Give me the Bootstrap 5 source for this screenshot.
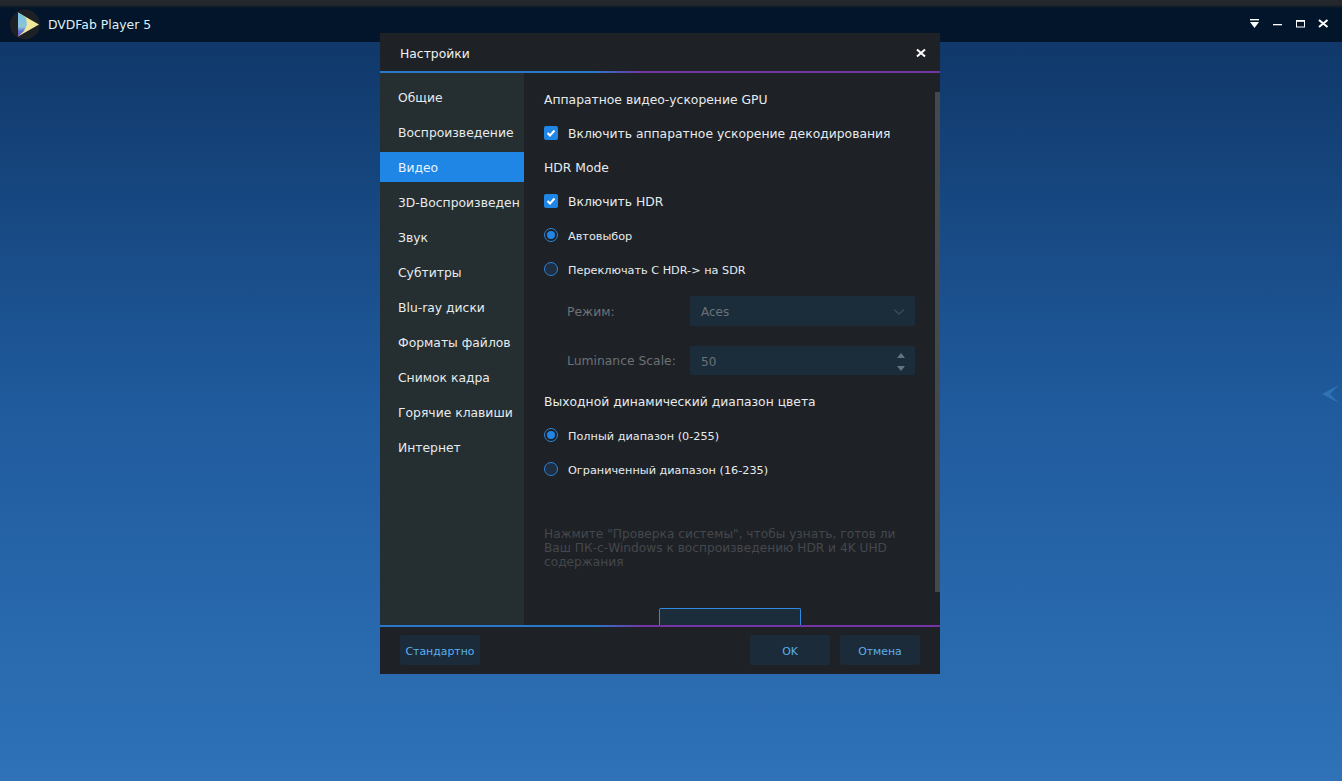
<!DOCTYPE html>
<html lang="ru">
<head>
<meta charset="utf-8">
<title>DVDFab Player 5</title>
<link href="https://cdn.jsdelivr.net/npm/bootstrap@5.3.0/dist/css/bootstrap.min.css" rel="stylesheet">
<style>
html,body{height:100%;}
body{font-family:"DejaVu Sans",sans-serif;font-size:12.35px;color:#e6ebee;background:linear-gradient(180deg,#10386a 42px,#1f5a9c 400px,#2f72b8 781px);overflow:hidden;height:781px;position:relative;}
.topstrip{height:42px;background-color:#03152b;background-image:linear-gradient(180deg,#23262a 0,#23262a 5px,#03152b 8px);padding:8px 0 0 10px;}
.appname{color:#dff0f5;font-size:12.4px;margin-left:6px;}
.winbtns{gap:11px;padding-right:12px;margin-bottom:2px;}
.dlg{position:absolute;left:380px;top:33px;width:560px;height:641px;background:#1e2126;}
.dlghead{height:38px;padding:2px 13px 0 20px;flex:none;}
.dlgtitle{font-size:12.35px;color:#eef1f3;padding-top:2px;}
.dlgclose{margin-bottom:1px;}
.gline{height:2px;margin-bottom:-1px;background:linear-gradient(90deg,#2a78c8 0,#2a78c8 38%,#7434a4 47%,#7434a4 100%);flex:none;position:relative;z-index:2;}
.dlgbody{height:553px;overflow:hidden;position:relative;}
.sidebar{width:144px;flex:none;background:#252e31;padding-top:10px;}
.sideitem{height:30px;margin-bottom:5px;line-height:32px;padding-left:18px;white-space:nowrap;color:#e6ebee;}
.sideitem.active-item{background:#1f86e6;color:#e9f3fb;}
.mainpane{padding:11px 0 0 20px;position:relative;flex:1;}
.rowline{height:34px;line-height:34px;display:flex;align-items:center;white-space:nowrap;}
.minor{font-size:11.25px;padding-top:2px;}
.chk{width:14px;height:14px;border-radius:2px;background:#1f86e6;margin:0 10px 2px 0;flex:none;display:flex;align-items:center;justify-content:center;}
.rad{width:14px;height:14px;border-radius:50%;border:1.5px solid #2c84d8;margin:0 10px 4px 0;flex:none;display:flex;align-items:center;justify-content:center;background:#1e2f42;}
.rad.on{background:transparent;}
.rad.on::after{content:"";width:8px;height:8px;border-radius:50%;background:#1f86e6;}
.fieldrow{display:flex;align-items:center;height:30px;margin-left:23px;color:#6b7278;margin-top:9px;}
.fieldspin{margin-top:20px;height:29px;}
.outhead{margin-top:10px;}
.fieldlabel{width:123px;flex:none;padding-top:2px;}
.fieldbox{width:225px;height:100%;background-color:#1b2c3a;background-image:radial-gradient(#31485a 0.6px,transparent 0.7px);background-size:4px 4px;border-radius:2px;display:flex;align-items:center;justify-content:space-between;padding:2px 10px 0 11px;color:#6b7278;font-size:12px;}
.hinttext{color:#44484c;font-size:12.2px;line-height:14px;width:370px;margin-top:40px;}
.sysbtn{position:absolute;left:135px;bottom:0;width:142px;height:17px;border:1px solid #2f8ae0;border-bottom:0;border-radius:2px 2px 0 0;background:#1b2c3a;}
.scrollthumb{position:absolute;right:0;top:20px;width:5px;height:500px;background:#45494c;}
.dlgfoot{padding:9px 20px 0 20px;height:48px;}
.footright{gap:10px;}
.footbtn{width:80px;height:30px;padding:2px 0 0;background-color:#1b2b39;background-image:radial-gradient(#27394a 0.6px,transparent 0.7px);background-size:4px 4px;color:#5bb0ee;font-size:10.9px;border:0;border-radius:2px;line-height:30px;text-align:center;}
.sidearrow{position:absolute;right:3px;top:384px;}
</style>
</head>
<body>
<div class="topstrip d-flex align-items-center justify-content-between">
  <div class="d-flex align-items-center">
    <svg width="32" height="32" viewBox="0 0 32 32" aria-label="DVDFab logo">
      <defs><linearGradient id="lg" x1="0" y1="0" x2="0" y2="1"><stop offset="0" stop-color="#6ec4ea"/><stop offset=".6" stop-color="#8fc3d6"/><stop offset=".78" stop-color="#5d6fd0"/><stop offset="1" stop-color="#7a4fb8"/></linearGradient></defs>
      <circle cx="15" cy="15.5" r="15" fill="#1d2024"/>
      <path d="M8 3.5 L29 15.5 L8 27.5 Z" fill="#efe79a"/>
      <path d="M8 3.5 L11 5.3 L16 9 L17 16 L14 22 L8 27.5 Z" fill="url(#lg)"/>
    </svg>
    <span class="appname">DVDFab Player 5</span>
  </div>
  <div class="d-flex align-items-center winbtns">
    <svg width="12" height="12" viewBox="0 0 12 12"><rect x="1" y="1" width="9" height="1.4" fill="#fff"/><path d="M1 4H10L5.5 10Z" fill="#fff"/></svg>
    <svg width="12" height="12" viewBox="0 0 12 12"><rect x="1" y="6" width="9" height="1.3" fill="#fff"/></svg>
    <svg width="12" height="12" viewBox="0 0 12 12"><rect x="1.5" y="2.5" width="8" height="6.5" fill="none" stroke="#fff" stroke-width="1"/><rect x="1" y="2" width="9" height="1.8" fill="#fff"/></svg>
    <svg width="12" height="12" viewBox="0 0 12 12"><path d="M1 2 L9.5 9 M9.5 2 L1 9" stroke="#fff" stroke-width="2"/></svg>
  </div>
</div>

<div class="sidearrow">
  <svg width="17" height="18" viewBox="0 0 17 18"><path d="M0 9 L17 0 L8 9 L17 18 Z" fill="#2f73b5"/></svg>
</div>

<div class="dlg d-flex flex-column">
  <div class="dlghead d-flex align-items-center justify-content-between">
    <span class="dlgtitle">Настройки</span>
    <svg class="dlgclose" width="12" height="12" viewBox="0 0 12 12"><path d="M2 2.5 L10 9.5 M10 2.5 L2 9.5" stroke="#fff" stroke-width="2"/></svg>
  </div>
  <div class="gline"></div>
  <div class="dlgbody d-flex">
    <nav class="sidebar">
      <div class="sideitem">Общие</div>
      <div class="sideitem">Воспроизведение</div>
      <div class="sideitem active-item">Видео</div>
      <div class="sideitem">3D-Воспроизведен</div>
      <div class="sideitem">Звук</div>
      <div class="sideitem">Субтитры</div>
      <div class="sideitem">Blu-ray диски</div>
      <div class="sideitem">Форматы файлов</div>
      <div class="sideitem">Снимок кадра</div>
      <div class="sideitem">Горячие клавиши</div>
      <div class="sideitem">Интернет</div>
    </nav>
    <div class="mainpane">
      <div class="rowline">Аппаратное видео-ускорение GPU</div>
      <div class="rowline"><span class="chk"><svg width="10" height="10" viewBox="0 0 10 10"><path d="M1.5 5 L4 7.5 L8.5 2.5" fill="none" stroke="#fff" stroke-width="2"/></svg></span>Включить аппаратное ускорение декодирования</div>
      <div class="rowline">HDR Mode</div>
      <div class="rowline"><span class="chk"><svg width="10" height="10" viewBox="0 0 10 10"><path d="M1.5 5 L4 7.5 L8.5 2.5" fill="none" stroke="#fff" stroke-width="2"/></svg></span>Включить HDR</div>
      <div class="rowline minor"><span class="rad on"></span>Автовыбор</div>
      <div class="rowline minor"><span class="rad"></span>Переключать С HDR-&gt; на SDR</div>
      <div class="fieldrow"><span class="fieldlabel">Режим:</span><div class="fieldbox"><span>Aces</span><svg width="12" height="8" viewBox="0 0 12 8"><path d="M1 1.5 L6 6 L11 1.5" fill="none" stroke="#3a4a58" stroke-width="1.4"/></svg></div></div>
      <div class="fieldrow fieldspin"><span class="fieldlabel">Luminance Scale:</span><div class="fieldbox"><span>50</span><svg width="8" height="22" viewBox="0 0 8 22"><path d="M0 7H8L4 2Z M0 15H8L4 20Z" fill="#66727c"/></svg></div></div>
      <div class="rowline outhead">Выходной динамический диапазон цвета</div>
      <div class="rowline minor"><span class="rad on"></span>Полный диапазон (0-255)</div>
      <div class="rowline minor"><span class="rad"></span>Ограниченный диапазон (16-235)</div>
      <p class="hinttext mb-0">Нажмите "Проверка системы", чтобы узнать, готов ли Ваш ПК-с-Windows к воспроизведению HDR и 4K UHD содержания</p>
      <div class="sysbtn"></div>
      <div class="scrollthumb"></div>
    </div>
  </div>
  <div class="gline"></div>
  <div class="dlgfoot d-flex justify-content-between">
    <button class="footbtn" type="button">Стандартно</button>
    <div class="d-flex footright">
      <button class="footbtn" type="button">OK</button>
      <button class="footbtn" type="button">Отмена</button>
    </div>
  </div>
</div>
<script src="https://cdn.jsdelivr.net/npm/bootstrap@5.3.0/dist/js/bootstrap.bundle.min.js"></script>
</body>
</html>
